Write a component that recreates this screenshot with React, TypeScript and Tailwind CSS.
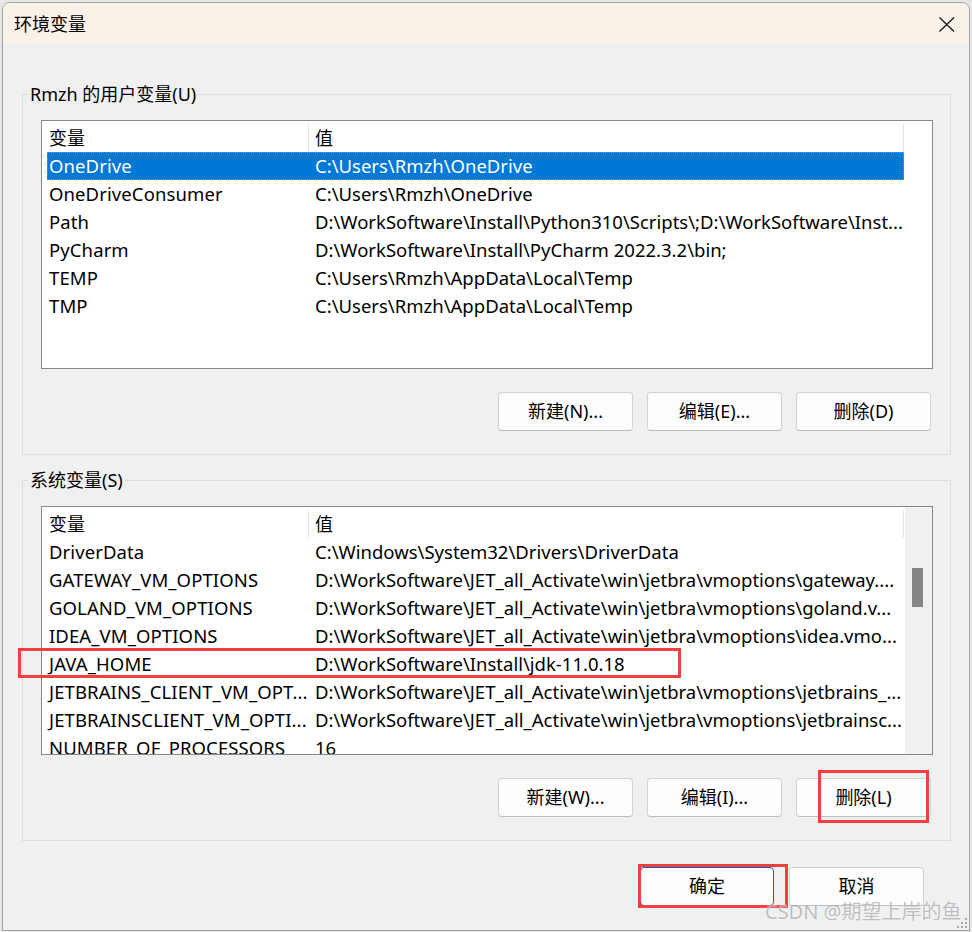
import React from "react";

type RowData = { name: string; value: string; selected?: boolean };

const userVars: RowData[] = [
  { name: "OneDrive", value: "C:\\Users\\Rmzh\\OneDrive", selected: true },
  { name: "OneDriveConsumer", value: "C:\\Users\\Rmzh\\OneDrive" },
  { name: "Path", value: "D:\\WorkSoftware\\Install\\Python310\\Scripts\\;D:\\WorkSoftware\\Inst..." },
  { name: "PyCharm", value: "D:\\WorkSoftware\\Install\\PyCharm 2022.3.2\\bin;" },
  { name: "TEMP", value: "C:\\Users\\Rmzh\\AppData\\Local\\Temp" },
  { name: "TMP", value: "C:\\Users\\Rmzh\\AppData\\Local\\Temp" },
];

const sysVars: RowData[] = [
  { name: "DriverData", value: "C:\\Windows\\System32\\Drivers\\DriverData" },
  { name: "GATEWAY_VM_OPTIONS", value: "D:\\WorkSoftware\\JET_all_Activate\\win\\jetbra\\vmoptions\\gateway...." },
  { name: "GOLAND_VM_OPTIONS", value: "D:\\WorkSoftware\\JET_all_Activate\\win\\jetbra\\vmoptions\\goland.v..." },
  { name: "IDEA_VM_OPTIONS", value: "D:\\WorkSoftware\\JET_all_Activate\\win\\jetbra\\vmoptions\\idea.vmo..." },
  { name: "JAVA_HOME", value: "D:\\WorkSoftware\\Install\\jdk-11.0.18" },
  { name: "JETBRAINS_CLIENT_VM_OPT...", value: "D:\\WorkSoftware\\JET_all_Activate\\win\\jetbra\\vmoptions\\jetbrains_..." },
  { name: "JETBRAINSCLIENT_VM_OPTI...", value: "D:\\WorkSoftware\\JET_all_Activate\\win\\jetbra\\vmoptions\\jetbrainsc..." },
  { name: "NUMBER_OF_PROCESSORS", value: "16" },
];

function Row({ name, value, selected }: RowData) {
  return (
    <div
      className={
        selected
          ? "ml-[5px] flex h-[28px] w-[857px] shrink-0 items-center bg-[#0078d7] text-white outline-1 -outline-offset-1 outline-dotted outline-[#c88a4a]"
          : "ml-[5px] flex h-[28px] w-[857px] shrink-0 items-center text-black"
      }
    >
      <div className="w-[261px] shrink-0 overflow-hidden whitespace-nowrap pl-[2px] tracking-[0.1px]">{name}</div>
      <div className="min-w-0 flex-1 overflow-hidden whitespace-nowrap pl-[7px]">{value}</div>
    </div>
  );
}

function ListView({ rows, scroll }: { rows: RowData[]; scroll?: boolean }) {
  return (
    <div className="flex h-[249px] w-[892px] border border-[#828790] bg-white text-[18.5px]">
      <div className="flex w-[863px] shrink-0 flex-col overflow-hidden">
        <div className="flex h-[31px] shrink-0 items-center pt-[3px]">
          <div className="w-[266px] shrink-0 pl-[7px] text-[18px]">变量</div>
          <div className="h-[28px] w-px shrink-0 self-start bg-[#e5e5e5]" />
          <div className="flex-1 pl-[6px] text-[18px]">值</div>
          <div className="h-[28px] w-px shrink-0 self-start bg-[#e5e5e5]" />
          <div className="w-[1px] shrink-0" />
        </div>
        <div className="flex flex-col">
          {rows.map((r) => (
            <Row key={r.name} {...r} />
          ))}
        </div>
      </div>
      {scroll ? (
        <div className="w-[27px] shrink-0 bg-[#f0f0f0]">
          <div className="ml-[7px] mt-[61px] h-[39px] w-[11px] bg-[#858585]" />
        </div>
      ) : (
        <div className="w-[27px] shrink-0 bg-white" />
      )}
    </div>
  );
}

function WinButton({ label, primary }: { label: string; primary?: boolean }) {
  return (
    <button
      className={
        primary
          ? "flex h-[39px] w-[134px] items-center justify-center rounded-[4px] border border-[#0067c0] bg-[#fdfdfd] text-[18px] text-black"
          : "flex h-[39px] w-[135px] items-center justify-center rounded-[4px] border border-[#d3d3d3] border-b-[#bdbdbd] bg-[#fdfdfd] text-[18px] text-black"
      }
    >
      {label}
    </button>
  );
}

function Group({
  title,
  rows,
  scroll,
  buttons,
  className,
}: {
  title: string;
  rows: RowData[];
  scroll?: boolean;
  buttons: string[];
  className: string;
}) {
  return (
    <fieldset className={className}>
      <legend className="ml-[5px] px-[2px] text-[18px] leading-[24px] text-black">{title}</legend>
      <div className="flex flex-col pb-[23px] pl-[18px] pr-[17px]">
        <div className="mt-[14px]">
          <ListView rows={rows} scroll={scroll} />
        </div>
        <div className="mr-[2px] mt-[23px] flex justify-end gap-[14px]">
          {buttons.map((b) => (
            <WinButton key={b} label={b} />
          ))}
        </div>
      </div>
    </fieldset>
  );
}

export default function App() {
  return (
    <div className="relative h-[932px] w-[972px] overflow-hidden bg-[#e6e6e6] pl-[2px] pt-[2px] font-['Noto_Sans','Noto_Sans_CJK_SC',sans-serif] text-[18px] text-black">
      <div className="flex h-[929px] w-[968px] flex-col overflow-hidden rounded-t-[8px] border border-[#a3a3a3] bg-[#f0f0f0]">
        {/* title bar */}
        <div className="flex h-[41px] shrink-0 items-center justify-between bg-[#faf1e8] pl-[11px] pr-[14px]">
          <span className="text-[18px] leading-none">环境变量</span>
          <svg width="16" height="15" viewBox="0 0 16 15" className="mt-[1px]">
            <path d="M0.5 0.5 L15 14.5 M15 0.5 L0.5 14.5" stroke="#111" strokeWidth="1.2" fill="none" />
          </svg>
        </div>
        {/* body */}
        <div className="flex flex-col pl-[19px] pr-[17px]">
          <Group
            className="mt-[38px] w-[929px] border border-[#dcdcdc] p-0"
            title="Rmzh 的用户变量(U)"
            rows={userVars}
            buttons={["新建(N)...", "编辑(E)...", "删除(D)"]}
          />
          <Group
            className="mt-[13px] w-[929px] border border-[#dcdcdc] p-0"
            title="系统变量(S)"
            rows={sysVars}
            scroll
            buttons={["新建(W)...", "编辑(I)...", "删除(L)"]}
          />
        </div>
        <div className="mt-[26px] flex justify-end gap-[15px] pr-[45px]">
          <WinButton label="确定" primary />
          <WinButton label="取消" />
        </div>
      </div>

      {/* annotation boxes */}
      <div className="absolute left-[18px] top-[648px] h-[30px] w-[663px] border-[3px] border-[#f43f3f]" />
      <div className="absolute left-[818px] top-[770px] h-[53px] w-[111px] border-[3px] border-[#f43f3f]" />
      <div className="absolute left-[638px] top-[864px] h-[44px] w-[150px] border-[3px] border-[#f43f3f]" />

      {/* watermark */}
      <div className="absolute left-[765px] top-[898px] whitespace-nowrap text-[20px] leading-[28px] text-[rgba(150,150,150,0.6)] [text-shadow:0_0_2px_rgba(255,255,255,0.8)]">
        CSDN @期望上岸的鱼
      </div>

      {/* resize grip */}
      <svg className="absolute left-[957px] top-[918px]" width="11" height="11" viewBox="0 0 11 11">
        <rect x="8" y="0" width="2" height="2" fill="#a8a8a8" />
        <rect x="4" y="4" width="2" height="2" fill="#a8a8a8" />
        <rect x="8" y="4" width="2" height="2" fill="#a8a8a8" />
        <rect x="0" y="8" width="2" height="2" fill="#a8a8a8" />
        <rect x="4" y="8" width="2" height="2" fill="#a8a8a8" />
        <rect x="8" y="8" width="2" height="2" fill="#a8a8a8" />
      </svg>
    </div>
  );
}
